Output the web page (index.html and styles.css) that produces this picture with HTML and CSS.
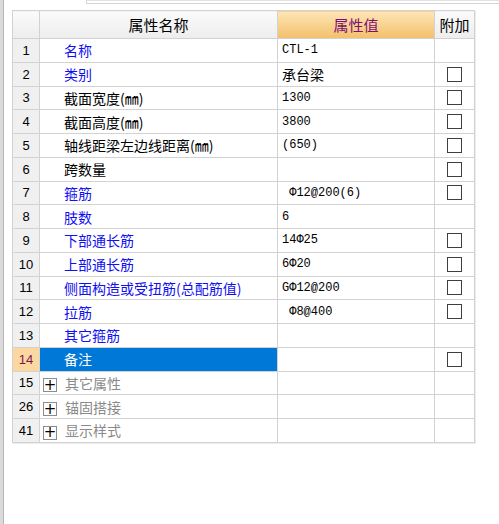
FILE: index.html
```html
<!DOCTYPE html>
<html lang="zh-CN">
<head>
    <meta charset="UTF-8">
    <title>属性编辑</title>
    <link rel="stylesheet" href="styles.css">
</head>
<body>
    <div class="frame">
        <div class="topbar"></div>
        <table class="props">
            <colgroup>
                <col class="c-no">
                <col class="c-name">
                <col class="c-val">
                <col class="c-ext">
            </colgroup>
            <thead>
                <tr>
                    <th class="no"></th>
                    <th>属性名称</th>
                    <th class="val-head">属性值</th>
                    <th>附加</th>
                </tr>
            </thead>
            <tbody>
                <tr><td class="no">1</td><td class="name blue">名称</td><td class="val">CTL-1</td><td class="ext"></td></tr>
                <tr><td class="no">2</td><td class="name blue">类别</td><td class="val cn">承台梁</td><td class="ext"><span class="chk"></span></td></tr>
                <tr><td class="no">3</td><td class="name">截面宽度(㎜)</td><td class="val">1300</td><td class="ext"><span class="chk"></span></td></tr>
                <tr><td class="no">4</td><td class="name">截面高度(㎜)</td><td class="val">3800</td><td class="ext"><span class="chk"></span></td></tr>
                <tr><td class="no">5</td><td class="name">轴线距梁左边线距离(㎜)</td><td class="val">(650)</td><td class="ext"><span class="chk"></span></td></tr>
                <tr><td class="no">6</td><td class="name">跨数量</td><td class="val"></td><td class="ext"><span class="chk"></span></td></tr>
                <tr><td class="no">7</td><td class="name blue">箍筋</td><td class="val"> Φ12@200(6)</td><td class="ext"><span class="chk"></span></td></tr>
                <tr><td class="no">8</td><td class="name blue">肢数</td><td class="val">6</td><td class="ext"></td></tr>
                <tr><td class="no">9</td><td class="name blue">下部通长筋</td><td class="val">14Φ25</td><td class="ext"><span class="chk"></span></td></tr>
                <tr><td class="no">10</td><td class="name blue">上部通长筋</td><td class="val">6Φ20</td><td class="ext"><span class="chk"></span></td></tr>
                <tr><td class="no">11</td><td class="name blue">侧面构造或受扭筋(总配筋值)</td><td class="val">GΦ12@200</td><td class="ext"><span class="chk"></span></td></tr>
                <tr><td class="no">12</td><td class="name blue">拉筋</td><td class="val"> Φ8@400</td><td class="ext"><span class="chk"></span></td></tr>
                <tr><td class="no">13</td><td class="name blue">其它箍筋</td><td class="val"></td><td class="ext"></td></tr>
                <tr class="selected"><td class="no">14</td><td class="name">备注</td><td class="val"></td><td class="ext"><span class="chk"></span></td></tr>
                <tr class="group"><td class="no">15</td><td class="name"><span class="plus">+</span>其它属性</td><td class="val"></td><td class="ext"></td></tr>
                <tr class="group"><td class="no">26</td><td class="name"><span class="plus">+</span>锚固搭接</td><td class="val"></td><td class="ext"></td></tr>
                <tr class="group"><td class="no">41</td><td class="name"><span class="plus">+</span>显示样式</td><td class="val"></td><td class="ext"></td></tr>
            </tbody>
        </table>
    </div>
</body>
</html>
```

FILE: styles.css
```css
html {
    background: #fff;
}
body {
    margin: 0;
    height: 524px;
    border-left: 3px solid #dadada;
    font-family: "Noto Sans CJK SC", sans-serif;
    color: #000;
}
.frame {
    height: 100%;
    border-left: 1px solid #b4b4b4;
}
.topbar {
    margin-left: 82px;
    height: 2px;
    border: 1px solid #d4d4d4;
    border-right: none;
    border-top-color: #e0e0e0;
}
.props {
    margin: 6px 0 0 8px;
    border-collapse: collapse;
    table-layout: fixed;
    width: 462px;
    border: 1px solid #cdcdcd;
    box-shadow: 1px 1px 0 #ececec;
}
.c-no { width: 27px; }
.c-name { width: 238px; }
.c-val { width: 157px; }
.c-ext { width: 40px; }

th, td {
    border: 1px solid #d2d2d2;
    padding: 0;
    white-space: nowrap;
    overflow: hidden;
}
thead tr {
    height: 28px;
}
th {
    font-weight: normal;
    font-size: 15px;
    background: linear-gradient(#fbfbfb, #ededed);
}
th.val-head {
    color: #7d0f78;
    background: linear-gradient(#fde6b6, #f3c06a);
}
tbody tr {
    height: 23.75px;
}
td.no {
    background: #f0f0f0;
    text-align: center;
    font-family: "Liberation Sans", sans-serif;
    font-size: 13px;
}
td.name {
    padding-left: 24px;
    font-size: 14px;
    overflow: visible;
}
td.blue {
    color: #1010f0;
}
td.val {
    padding-left: 4px;
    font-family: "Liberation Mono", "Noto Sans CJK SC", monospace;
    font-size: 12px;
    white-space: pre;
}
td.val.cn {
    font-family: "Noto Sans CJK SC", sans-serif;
    font-size: 14px;
}
td.ext {
    text-align: center;
    line-height: 0;
}
.chk {
    display: inline-block;
    width: 13px;
    height: 13px;
    border: 1px solid #3e3e3e;
    background: #fff;
}
.selected td.no {
    background: #fcd8a0;
    color: #7a1550;
}
.selected td.name {
    background: #0078d7;
    color: #fff;
}
.group td.name {
    padding-left: 3px;
    color: #8a8a8a;
}
.plus {
    display: inline-flex;
    justify-content: center;
    align-items: center;
    width: 12px;
    height: 12px;
    margin-right: 8px;
    border: 1px solid #8c8c8c;
    color: #000;
    font-family: "DejaVu Sans", sans-serif;
    font-size: 15px;
    line-height: 1;
    vertical-align: -1px;
}
```
